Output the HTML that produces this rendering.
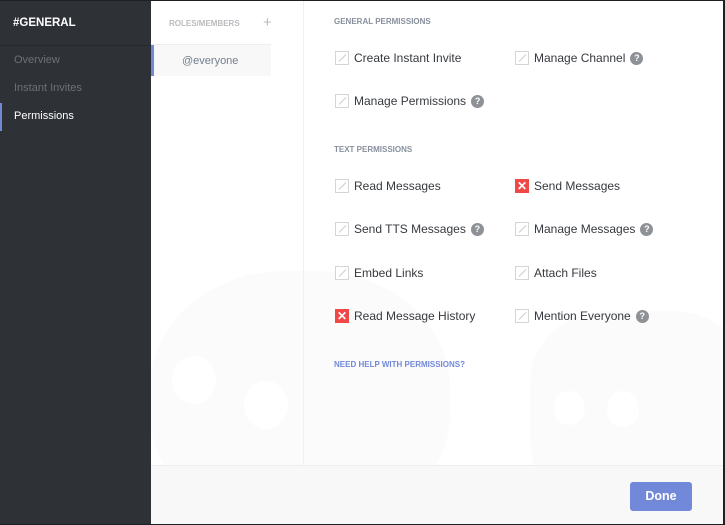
<!DOCTYPE html>
<html><head><style>
*{margin:0;padding:0;box-sizing:border-box}
body{width:725px;height:525px;background:#1e2124;font-family:"Liberation Sans",sans-serif;position:relative;overflow:hidden}
#wrap{position:absolute;left:0;top:1px;width:723px;height:523px;background:#fff;overflow:hidden}
#side{position:absolute;left:0;top:0;width:151px;height:523px;background:#2e3136}
#side .h{position:absolute;left:13px;top:16px;color:#fff;font-weight:bold;font-size:11.5px}
#side .sep{position:absolute;left:0;top:44px;width:151px;height:1px;background:#26282c}
#side .it{position:absolute;left:14px;font-size:11px;color:#6d7075}
#side .act{color:#fff}
#side .bar{position:absolute;left:0;top:102px;width:2px;height:28px;background:#7289da}
#roles{position:absolute;left:151px;top:0;width:153px;height:464px;border-right:1px solid #f0f0f0}
#roles .t{position:absolute;left:18px;top:18px;font-size:8px;font-weight:bold;color:#b9bbbe}
#roles .plus{position:absolute;left:112px;top:13px;font-size:15px;color:#b9bbbe}
#roles .line{position:absolute;left:0;top:43px;width:120px;height:1px;background:#eee}
#roles .sel{position:absolute;left:0;top:44px;width:120px;height:31px;background:#f8f8f9;border-left:3px solid #7289da;font-size:11px;color:#737f8d;padding:10px 0 0 28px}
.sec{position:absolute;left:334px;font-size:8px;font-weight:bold;color:#87909c}
.p{position:absolute;font-size:12px;color:#36393e;height:15px;line-height:15px}
.cb{display:inline-block;width:14px;height:14px;border:1px solid #d5d5d5;vertical-align:top;margin-right:5px;position:relative;background:#fff}
.cb:after{content:"";position:absolute;left:6px;top:1px;width:1px;height:10px;background:#ccc;transform:rotate(45deg)}
.x{display:inline-block;width:14px;height:14px;background:#f04747;vertical-align:top;margin-right:5px;color:#fff;font-size:12px;line-height:14px;text-align:center;font-weight:bold}
.q{display:inline-block;width:13px;height:13px;border-radius:50%;background:#8e9297;color:#fff;font-size:9px;line-height:13px;text-align:center;font-weight:bold;margin-left:5px;vertical-align:top;margin-top:1px}
#foot{position:absolute;left:151px;top:464px;width:572px;height:59px;background:#f8f8f8;border-top:1px solid #eee}
#done{position:absolute;left:479px;top:16px;width:62px;height:29px;background:#7289da;border-radius:3px;color:#fff;font-size:12.5px;font-weight:bold;text-align:center;line-height:29px}
.bg{position:absolute;border-radius:50%;background:#fbfbfb}
</style></head><body>
<div id="wrap">
<div class="bg" style="left:150px;top:270px;width:300px;height:260px;border-radius:45%"></div>
<div class="bg" style="left:530px;top:310px;width:220px;height:200px;border-radius:35%"></div>
<div class="bg" style="left:172px;top:355px;width:44px;height:48px;background:#fff"></div>
<div class="bg" style="left:244px;top:380px;width:44px;height:48px;background:#fff"></div>
<div class="bg" style="left:553px;top:390px;width:32px;height:34px;background:#fff"></div>
<div class="bg" style="left:607px;top:390px;width:32px;height:36px;background:#fff"></div>
<div id="side">
<div class="h">#GENERAL</div><div class="sep"></div>
<div class="it" style="top:53px">Overview</div>
<div class="it" style="top:81px">Instant Invites</div>
<div class="it act" style="top:109px">Permissions</div>
<div class="bar"></div>
</div>
<div id="roles"><div class="t">ROLES/MEMBERS</div><div class="plus">+</div><div class="line"></div><div class="sel">@everyone</div></div>
<div class="sec" style="top:16px">GENERAL PERMISSIONS</div>
<div class="p" style="left:335px;top:50px"><span class="cb"></span>Create Instant Invite</div>
<div class="p" style="left:515px;top:50px"><span class="cb"></span>Manage Channel<span class="q">?</span></div>
<div class="p" style="left:335px;top:93px"><span class="cb"></span>Manage Permissions<span class="q">?</span></div>
<div class="sec" style="top:144px">TEXT PERMISSIONS</div>
<div class="p" style="left:335px;top:178px"><span class="cb"></span>Read Messages</div>
<div class="p" style="left:515px;top:178px"><span class="x">✕</span>Send Messages</div>
<div class="p" style="left:335px;top:221px"><span class="cb"></span>Send TTS Messages<span class="q">?</span></div>
<div class="p" style="left:515px;top:221px"><span class="cb"></span>Manage Messages<span class="q">?</span></div>
<div class="p" style="left:335px;top:265px"><span class="cb"></span>Embed Links</div>
<div class="p" style="left:515px;top:265px"><span class="cb"></span>Attach Files</div>
<div class="p" style="left:335px;top:308px"><span class="x">✕</span>Read Message History</div>
<div class="p" style="left:515px;top:308px"><span class="cb"></span>Mention Everyone<span class="q">?</span></div>
<div class="sec" style="top:359px;color:#7289da">NEED HELP WITH PERMISSIONS?</div>
<div id="foot"><div id="done">Done</div></div>
</div>
</body></html>
